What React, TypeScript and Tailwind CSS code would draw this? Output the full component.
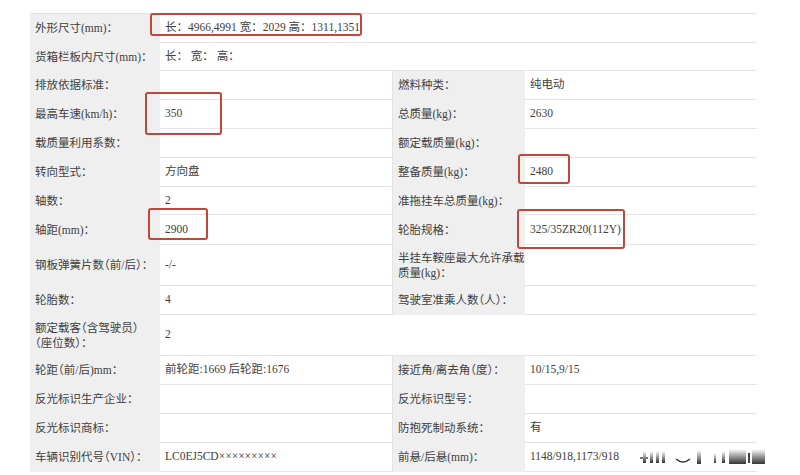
const font = { fontFamily: '"Liberation Serif", "Noto Sans CJK SC", serif' }

type Row = {
  h: string
  l1: React.ReactNode
  v1?: string
  l2?: React.ReactNode
  v2?: string
  full?: boolean
  noRight?: boolean
}

const rows: Row[] = [
  { h: 'h-[29px]', l1: '外形尺寸(mm)：', v1: '长：4966,4991 宽：2029 高：1311,1351', full: true },
  { h: 'h-[28px]', l1: '货箱栏板内尺寸(mm)：', v1: '长： 宽： 高：', full: true },
  { h: 'h-[29px]', l1: '排放依据标准：', v1: '', l2: '燃料种类：', v2: '纯电动' },
  { h: 'h-[29px]', l1: '最高车速(km/h)：', v1: '350', l2: '总质量(kg)：', v2: '2630' },
  { h: 'h-[29px]', l1: '载质量利用系数：', v1: '', l2: '额定载质量(kg)：', v2: '' },
  { h: 'h-[29px]', l1: '转向型式：', v1: '方向盘', l2: '整备质量(kg)：', v2: '2480' },
  { h: 'h-[28px]', l1: '轴数：', v1: '2', l2: '准拖挂车总质量(kg)：', v2: '' },
  { h: 'h-[30px]', l1: '轴距(mm)：', v1: '2900', l2: '轮胎规格：', v2: '325/35ZR20(112Y)' },
  {
    h: 'h-[41px]',
    l1: '钢板弹簧片数（前/后）：',
    v1: '-/-',
    l2: (
      <>
        半挂车鞍座最大允许承载
        <br />
        质量(kg)：
      </>
    ),
    v2: '',
  },
  { h: 'h-[29px]', l1: '轮胎数：', v1: '4', l2: '驾驶室准乘人数（人）：', v2: '' },
  {
    h: 'h-[41px]',
    l1: (
      <>
        额定载客（含驾驶员）
        <br />
        （座位数）：
      </>
    ),
    v1: '2',
    noRight: true,
  },
  { h: 'h-[29px]', l1: '轮距（前/后)mm：', v1: '前轮距:1669 后轮距:1676', l2: '接近角/离去角（度）：', v2: '10/15,9/15' },
  { h: 'h-[29px]', l1: '反光标识生产企业：', v1: '', l2: '反光标识型号：', v2: '' },
  { h: 'h-[29px]', l1: '反光标识商标：', v1: '', l2: '防抱死制动系统：', v2: '有' },
  { h: 'h-[29px]', l1: '车辆识别代号（VIN）：', v1: 'LC0EJ5CD×××××××××', l2: '前悬/后悬(mm)：', v2: '1148/918,1173/918' },
]

function Label({ children, w }: { children: React.ReactNode; w: string }) {
  return (
    <div
      className={`${w} shrink-0 h-full flex items-center px-[5px] bg-[#efefef] leading-[15px] whitespace-nowrap [font-feature-settings:'halt']`}
    >
      <div>{children}</div>
    </div>
  )
}

function Value({ children, w }: { children?: React.ReactNode; w: string }) {
  return (
    <div className={`${w} shrink-0 h-full flex items-center pl-[5px] border-b border-[#e4e4e4] bg-white whitespace-pre`}>
      {children}
    </div>
  )
}

export default function App() {
  return (
    <div className="w-[800px] h-[475px] bg-white overflow-hidden text-[11.5px] text-[#404040]" style={font}>
      <div className="relative ml-[30px] mt-[13px] w-[727px] border-t border-r border-[#e4e4e4]">
        {rows.map((r, i) => (
          <div key={i} className={`flex ${r.h}`}>
            <Label w="w-[130px]">{r.l1}</Label>
            {r.full || r.noRight ? (
              <Value w="w-[597px]">{r.v1}</Value>
            ) : (
              <>
                <Value w="w-[233px] border-r">{r.v1}</Value>
                <Label w="w-[132px]">{r.l2}</Label>
                <Value w="w-[232px]">{r.v2}</Value>
              </>
            )}
          </div>
        ))}

        {/* red highlight boxes */}
        <div className="absolute left-[120px] top-[-1px] w-[212px] h-[23px] rounded-[3px] border-2 border-[#c0473a]" />
        <div className="absolute left-[115px] top-[78px] w-[77px] h-[43px] rounded-[3px] border-2 border-[#c0473a]" />
        <div className="absolute left-[118px] top-[194px] w-[60px] h-[32px] rounded-[3px] border-2 border-[#c0473a]" />
        <div className="absolute left-[488px] top-[140px] w-[52px] h-[30px] rounded-[3px] border-2 border-[#c0473a]" />
        <div className="absolute left-[487px] top-[195px] w-[108px] h-[40px] rounded-[3px] border-2 border-[#c0473a]" />

        {/* watermark */}
        <svg className="absolute left-[610px] top-[427px]" width="160" height="24" viewBox="0 0 160 24" aria-hidden="true">
          <defs>
            <linearGradient id="wm" x1="0" y1="0" x2="0" y2="1">
              <stop offset="0" stopColor="#fff" />
              <stop offset="1" stopColor="#333" />
            </linearGradient>
          </defs>
          <rect x="0" y="8" width="145" height="16" fill="#fff" />
          <rect x="0" y="16" width="8" height="2" fill="#777" />
          <rect x="3" y="10" width="3" height="12" fill="url(#wm)" />
          <rect x="10" y="10" width="3" height="12" fill="url(#wm)" />
          <rect x="16" y="10" width="3" height="12" fill="url(#wm)" />
          <rect x="22" y="10" width="3" height="12" fill="url(#wm)" />
          <path d="M36 18 q7 6 14 0" stroke="#333" strokeWidth="1.5" fill="none" />
          <rect x="57" y="9" width="4" height="14" fill="url(#wm)" />
          <rect x="74" y="12" width="2" height="10" fill="url(#wm)" />
          <rect x="82" y="10" width="3" height="12" fill="url(#wm)" />
          <rect x="89" y="8" width="17" height="15" fill="url(#wm)" />
          <rect x="108" y="12" width="2" height="10" fill="#444" />
          <rect x="112" y="8" width="13" height="15" fill="url(#wm)" />
        </svg>
      </div>
    </div>
  )
}
